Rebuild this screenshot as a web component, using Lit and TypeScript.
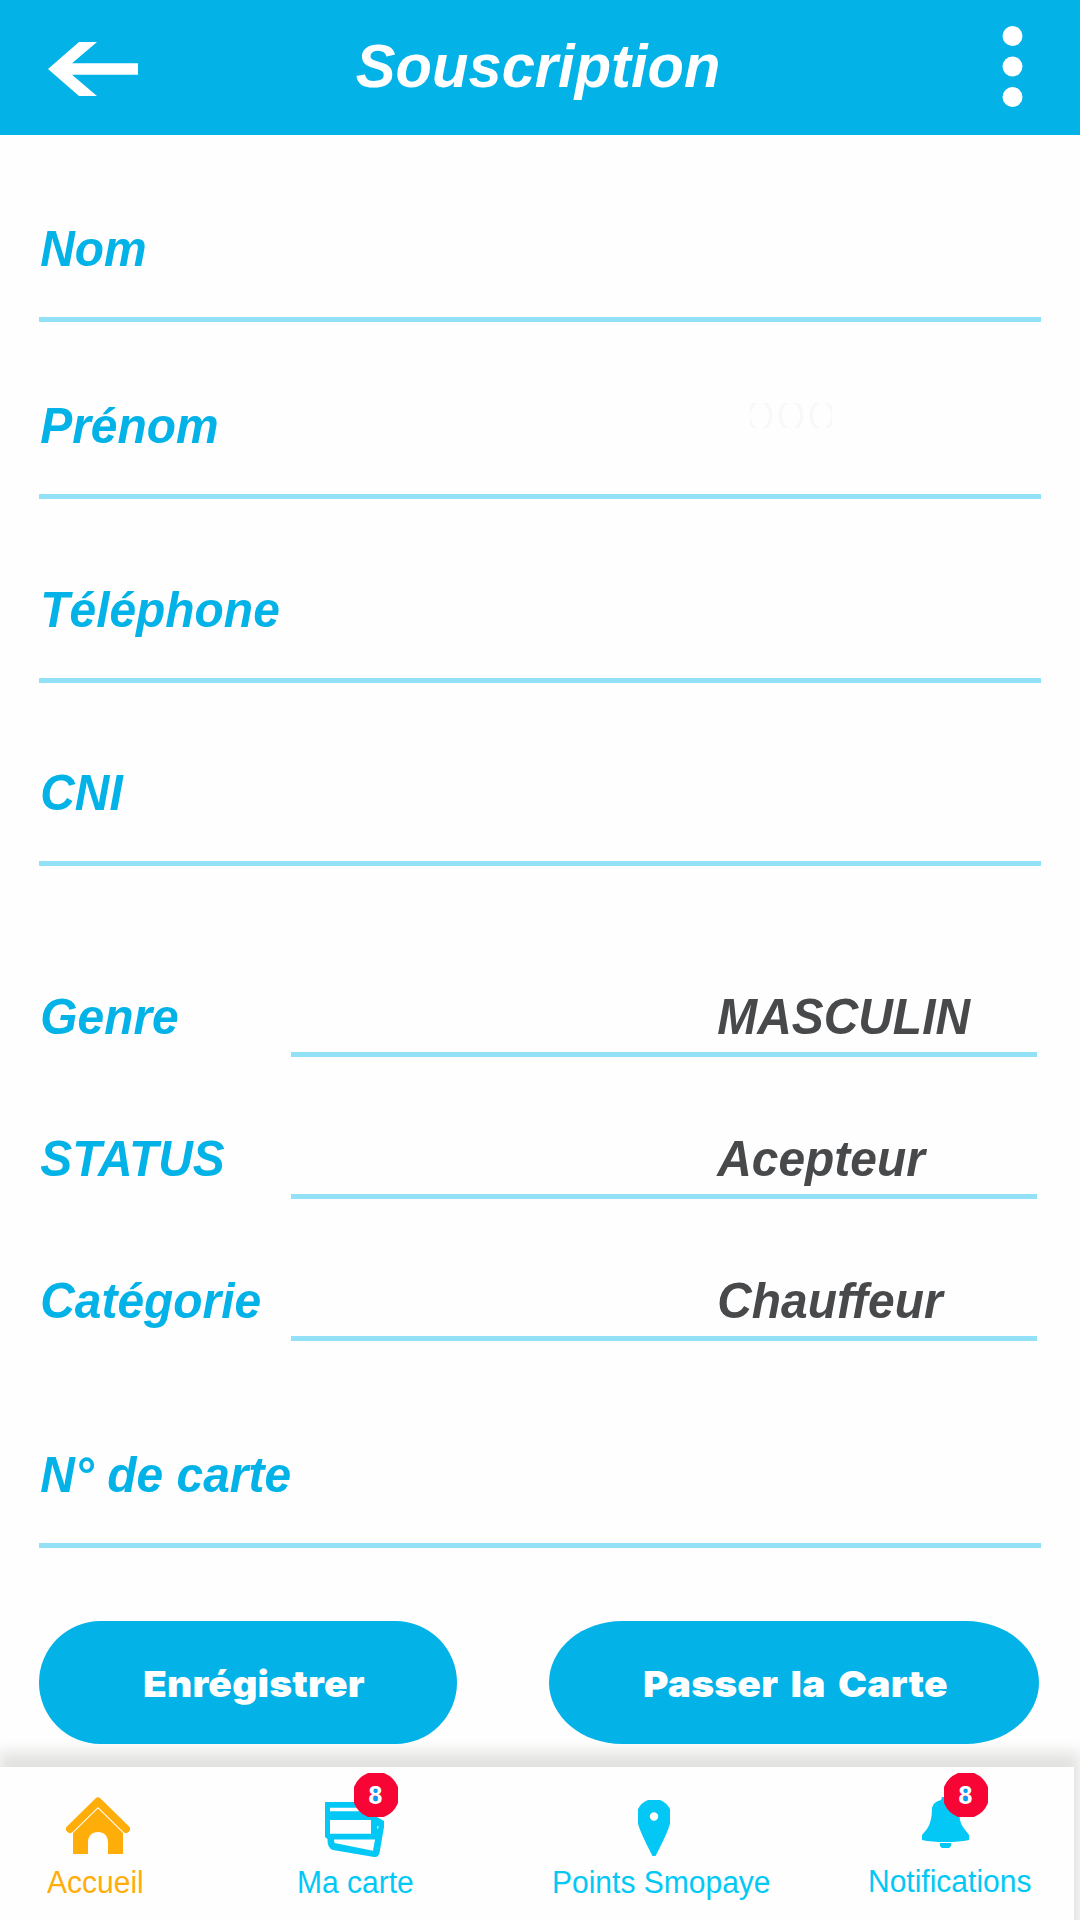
import { LitElement, html, css, svg } from "lit";
import { customElement, property } from "lit/decorators.js";

@customElement("form-line")
export class FormLine extends LitElement {
  @property() label = "";
  @property() value = "";
  @property({ type: Boolean, reflect: true }) choice = false;

  static styles = css`
    :host {
      display: block;
      height: 98px;
      border-bottom: 5px solid #93e1f6;
      color: #03b2e7;
      font: italic bold 50px/60px "Liberation Sans", Arial, sans-serif;
      white-space: nowrap;
    }
    :host([choice]) {
      display: grid;
      grid-template-columns: 252px 746px;
      height: 70px;
      border-bottom: 0;
    }
    .text {
      display: inline-block;
      transform: scaleX(0.958);
      transform-origin: left;
      padding-left: 1.3px;
    }
    .value {
      box-sizing: border-box;
      height: 70px;
      padding-left: 424.5px;
      border-bottom: 5px solid #93e1f6;
      color: #48494b;
    }
  `;

  render() {
    return this.choice
      ? html`<div><span class="text">${this.label}</span></div>
          <div class="value"><span class="text">${this.value}</span></div>`
      : html`<span class="text">${this.label}</span>`;
  }
}

const badge = html`<span class="badge">
  <svg class="disc" width="44" height="44" viewBox="0 0 44 44">
    <circle cx="22" cy="22" r="23.3" fill="#f60535" />
    <circle cx="21.5" cy="18.3" r="3" fill="#0a9cff" />
    <circle cx="21.5" cy="26" r="3" fill="#0a9cff" />
  </svg>
  <span class="count">8</span>
</span>`;

@customElement("app-root")
export class AppRoot extends LitElement {
  static styles = css`
    :host {
      display: flex;
      flex-direction: column;
      width: 1080px;
      height: 1920px;
      overflow: hidden;
      background: #fefefe;
      font-family: "Liberation Sans", Arial, sans-serif;
    }
    svg {
      display: block;
    }
    .header {
      display: grid;
      flex: none;
      grid-template-columns: 90px 1fr 21px;
      box-sizing: border-box;
      height: 135px;
      padding: 0 57px 0 48px;
      background: #03b2e7;
      color: #fff;
    }
    .back {
      margin-top: 42px;
    }
    .title {
      margin: 29px 0 0;
      text-align: center;
      font: italic bold 61px/74px "Liberation Sans", Arial, sans-serif;
    }
    .title-text {
      display: inline-block;
      transform: scaleX(0.978);
      padding-right: 66px;
    }
    .more {
      margin-top: 26px;
    }
    .form {
      display: flex;
      flex: none;
      flex-direction: column;
      width: 1002px;
      padding: 84px 0 0 39px;
    }
    .prenom {
      margin-top: 74px;
      position: relative;
    }
    .tel {
      margin-top: 81px;
    }
    .cni {
      margin-top: 80px;
    }
    .genre {
      margin-top: 121px;
    }
    .next {
      margin-top: 72px;
    }
    .carte {
      margin-top: 104px;
    }
    .faint {
      position: absolute;
      left: 711px;
      top: 7px;
    }
    .actions {
      display: flex;
      flex: none;
      gap: 92px;
      margin: 73px 0 23px 39px;
      position: relative;
      z-index: 1;
    }
    .btn {
      width: 418px;
      height: 123px;
      padding: 0;
      border: 0;
      border-radius: 61.5px;
      background: #03b2e7;
      color: #fff;
      text-align: left;
      font: 900 36px/123px Inter, "Liberation Sans", sans-serif;
    }
    .btn-text {
      display: block;
      margin-left: 103.5px;
      padding-top: 3px;
      line-height: 120px;
      white-space: nowrap;
      transform: scaleX(1.08);
      transform-origin: left;
      letter-spacing: 0.2px;
      word-spacing: 4px;
    }
    .wide {
      width: 490px;
      border-radius: 73px / 61.5px;
    }
    .wide .btn-text {
      margin-left: 94px;
    }
    .nav {
      display: grid;
      grid-template-columns: 230px 264px 318px 262px;
      flex: none;
      width: 1074px;
      height: 190px;
      background: #fefefe;
      box-shadow: 2px -11px 14px 4px #e2e2e0;
      color: #03c8f5;
      font-size: 31px;
      line-height: 36px;
    }
    .item {
      position: relative;
      display: flex;
      flex-direction: column;
      white-space: nowrap;
    }
    .active {
      color: #ffad08;
    }
    .icon {
      height: 98px;
      box-sizing: border-box;
      padding-top: 30px;
    }
    .label {
      transform: scaleX(0.968);
      transform-origin: left;
    }
    .home .icon { padding-left: 66px; }
    .home .label { margin-left: 47px; }
    .card .icon { padding: 35px 0 0 95px; }
    .card .label { margin-left: 67px; }
    .points .icon { padding: 33px 0 0 144px; }
    .points .label { margin-left: 58px; }
    .notif .icon { height: 97px; padding-left: 110px; }
    .notif .label { margin-left: 56px; }
    .badge {
      position: absolute;
      top: 6px;
      left: 124px;
      width: 44px;
      height: 44px;
    }
    .notif .badge {
      left: 132px;
    }
    .count {
      position: absolute;
      inset: 0 1px 0 0;
      color: #fff;
      text-align: center;
      font: bold 25px/44px "Liberation Sans", Arial, sans-serif;
    }
  `;

  render() {
    return html`
      <header class="header">
        <svg class="back" width="90" height="54" viewBox="0 0 90 54">
          <path d="M0 27 31 0H49L24 21.3H90V32.7H24L49 54H31Z" fill="#fff" />
        </svg>
        <h1 class="title"><span class="title-text">Souscription</span></h1>
        <svg class="more" width="21" height="81" viewBox="0 0 21 81">
          ${[10, 40.5, 71].map(
            (y) => svg`<circle cx="10.5" cy=${y} r="10" fill="#fff" />`
          )}
        </svg>
      </header>
      <main class="form">
        <form-line label="Nom"></form-line>
        <div class="prenom">
          <form-line label="Prénom"></form-line>
          <svg class="faint" width="82" height="25" viewBox="0 0 82 25">
            ${[10, 41, 72].map(
              (x) => svg`<ellipse cx=${x} cy="12.5" rx="10.8" ry="14" fill="none" stroke="#f8f8f8" stroke-width="3" />`
            )}
          </svg>
        </div>
        <form-line class="tel" label="Téléphone"></form-line>
        <form-line class="cni" label="CNI"></form-line>
        <form-line class="genre" choice label="Genre" value="MASCULIN"></form-line>
        <form-line class="next" choice label="STATUS" value="Acepteur"></form-line>
        <form-line class="next" choice label="Catégorie" value="Chauffeur"></form-line>
        <form-line class="carte" label="N° de carte"></form-line>
      </main>
      <div class="actions">
        <button class="btn"><span class="btn-text">Enrégistrer</span></button>
        <button class="btn wide"><span class="btn-text">Passer la Carte</span></button>
      </div>
      <nav class="nav">
        <div class="item home active">
          <div class="icon">
            <svg width="64" height="57" viewBox="0 0 64 57">
              <path d="M4 32 32 4.5 60 32" fill="none" stroke="#ffad08" stroke-width="8" stroke-linecap="round" stroke-linejoin="round" />
              <path d="M32 11.5 57 36V57H42V46C42 38.500 38 35 32 35S22 38.500 22 46V57H7V36Z" fill="#ffad08" />
            </svg>
          </div>
          <span class="label">Accueil</span>
        </div>
        <div class="item card">
          <div class="icon">
            <svg width="60" height="56" viewBox="0 0 60 56">
              <path fill="#03c8f5" fill-rule="evenodd" d="M0 0H49L52 15 59 19V25L54.500 51Q53.500 55.500 49 55L8 48Q2 46 2.500 37L0 35ZM5 5.700V9.300H46V5.700ZM5 18V31.700H46V18ZM9 37.500 9.500 41 48 48.700 50 37.500ZM52.500 24 52 26.500H53.200L53.500 24Z" />
            </svg>
          </div>
          <span class="label">Ma carte</span>
          ${badge}
        </div>
        <div class="item points">
          <div class="icon">
            <svg width="32" height="56" viewBox="0 0 32 56">
              <path fill="#03c8f5" fill-rule="evenodd" d="M10 0H22Q28.500 2.500 32 9V23Q31 30 17.500 56H14.500Q1 30 0 23V9Q3.500 2.500 10 0ZM16 12.300A4.200 4.200 0 1 0 16 20.700 4.200 4.200 0 1 0 16 12.300Z" />
            </svg>
          </div>
          <span class="label">Points Smopaye</span>
        </div>
        <div class="item notif">
          <div class="icon">
            <svg width="47" height="51" viewBox="0 0 47 51">
              <path fill="#03c8f5" d="M20 0H27L28 3Q36 5 37 12 37 25 41 30L47 38V43Q37 45 23.500 45T0 43V38L5 32Q10 25 10 11 11 5 19 3ZM18 46H29Q30 49 27 51H20Q17 49 18 46Z" />
            </svg>
          </div>
          <span class="label">Notifications</span>
          ${badge}
        </div>
      </nav>
    `;
  }
}
